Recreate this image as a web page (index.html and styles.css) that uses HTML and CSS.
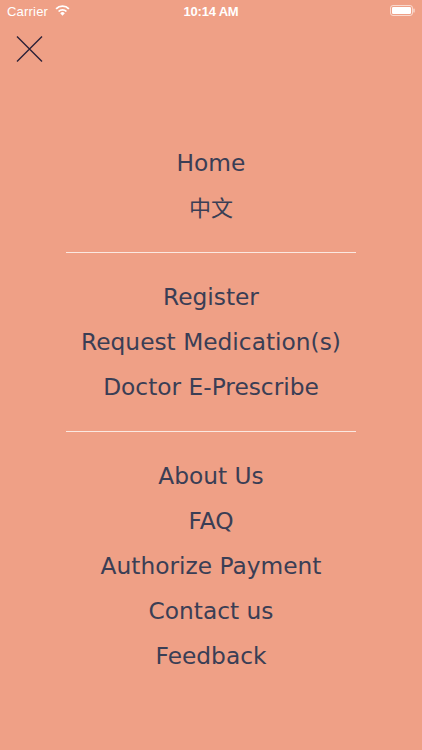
FILE: index.html
```html
<!DOCTYPE html>
<html>
<head>
<meta charset="utf-8">
<link rel="stylesheet" href="styles.css">
</head>
<body>
<div class="screen">
  <div class="statusbar">
    <div class="sb-left">
      <span class="carrier">Carrier</span>
      <svg class="wifi" width="15" height="11" viewBox="0 0 15 11">
        <path d="M7.5 10.8 L5.2 8.2 A3.2 3.2 0 0 1 9.8 8.2 Z" fill="#fff"/>
        <path d="M3.6 6.5 A5.4 5.4 0 0 1 11.4 6.5" stroke="#fff" stroke-width="1.8" fill="none"/>
        <path d="M1.1 3.9 A8.8 8.8 0 0 1 13.9 3.9" stroke="#fff" stroke-width="1.8" fill="none"/>
      </svg>
    </div>
    <div class="time">10:14 AM</div>
    <div class="sb-right">
      <svg width="25" height="11" viewBox="0 0 25 11">
        <rect x="0.5" y="0.5" width="22" height="10" rx="2.5" fill="none" stroke="#fff" stroke-opacity="0.6"/>
        <rect x="2" y="2" width="19" height="7" rx="1.2" fill="#fff"/>
        <rect x="23.3" y="3.5" width="1.4" height="4" rx="0.6" fill="#fff" fill-opacity="0.6"/>
      </svg>
    </div>
  </div>
  <div class="topbar">
    <svg class="close" width="27" height="26" viewBox="0 0 27 26">
      <path d="M1 0.5 L26 25.5 M26 0.5 L1 25.5" stroke="#2b2137" stroke-width="1.4" fill="none"/>
    </svg>
  </div>
  <nav class="menu">
    <div class="item">Home</div>
    <div class="item cjk">中文</div>
    <div class="sep"><span></span></div>
    <div class="item">Register</div>
    <div class="item">Request Medication(s)</div>
    <div class="item">Doctor E-Prescribe</div>
    <div class="sep"><span></span></div>
    <div class="item">About Us</div>
    <div class="item">FAQ</div>
    <div class="item">Authorize Payment</div>
    <div class="item">Contact us</div>
    <div class="item">Feedback</div>
  </nav>
</div>
</body>
</html>
```
FILE: styles.css
```css
html, body {
  margin: 0;
  padding: 0;
}
body {
  background: #efa086;
  width: 422px;
  height: 750px;
  overflow: hidden;
}
.screen {
  width: 422px;
  height: 750px;
  display: flex;
  flex-direction: column;
}
.statusbar {
  height: 22px;
  display: grid;
  grid-template-columns: 1fr auto 1fr;
  align-items: center;
  font-family: "Liberation Sans", Arial, sans-serif;
  color: #fff;
  font-size: 13px;
}
.sb-left {
  display: flex;
  align-items: center;
  padding-left: 7px;
  gap: 7px;
}
.carrier {
  letter-spacing: 0.2px;
}
.wifi {
  margin-top: -2px;
}
.time {
  font-weight: bold;
  font-size: 13px;
  letter-spacing: -0.2px;
}
.sb-right {
  display: flex;
  justify-content: flex-end;
  padding-right: 7px;
  margin-top: -2px;
}
.topbar {
  height: 118px;
  padding-left: 16px;
  padding-top: 14px;
  box-sizing: border-box;
}
.close {
  display: block;
}
.menu {
  display: flex;
  flex-direction: column;
  align-items: center;
  font-family: "DejaVu Sans", Verdana, sans-serif;
  font-size: 23.3px;
  color: #3a3e55;
}
.item {
  height: 45px;
  line-height: 45px;
  text-align: center;
  white-space: nowrap;
}
.cjk {
  font-family: "Noto Sans CJK SC", "DejaVu Sans", sans-serif;
  font-size: 22px;
  line-height: 42px;
  height: 45px;
}
.sep {
  height: 44px;
  width: 290px;
  display: flex;
  flex-direction: column;
  justify-content: center;
}
.sep span {
  display: block;
  height: 1px;
  background: #fbe8e0;
  margin-top: 1px;
}
```
